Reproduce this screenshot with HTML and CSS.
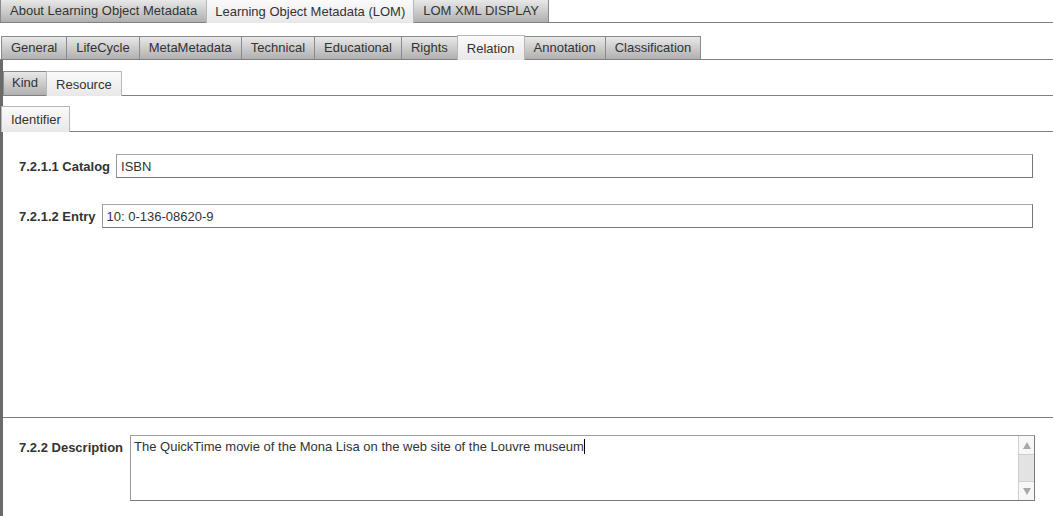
FILE: index.html
```html
<!DOCTYPE html>
<html>
<head>
<meta charset="utf-8">
<link rel="stylesheet" href="styles.css">
</head>
<body>
<div class="app">
  <div class="tabbar top">
    <div class="tab">About Learning Object Metadata</div>
    <div class="tab active">Learning Object Metadata (LOM)</div>
    <div class="tab">LOM XML DISPLAY</div>
  </div>
  <div class="tabbar second">
    <div class="tab">General</div>
    <div class="tab">LifeCycle</div>
    <div class="tab">MetaMetadata</div>
    <div class="tab">Technical</div>
    <div class="tab">Educational</div>
    <div class="tab">Rights</div>
    <div class="tab active">Relation</div>
    <div class="tab">Annotation</div>
    <div class="tab">Classification</div>
  </div>
  <div class="panel">
    <div class="tabbar third">
      <div class="tab">Kind</div>
      <div class="tab active">Resource</div>
    </div>
    <div class="tabbar fourth">
      <div class="tab active">Identifier</div>
    </div>
    <div class="fields">
      <div class="field">
        <label class="label">7.2.1.1 Catalog</label>
        <input class="input" type="text" value="ISBN">
      </div>
      <div class="field">
        <label class="label">7.2.1.2 Entry</label>
        <input class="input" type="text" value="10: 0-136-08620-9">
      </div>
    </div>
    <div class="desc">
      <label class="label">7.2.2 Description</label>
      <div class="textarea">
        <div class="ta-text">The QuickTime movie of the Mona Lisa on the web site of the Louvre museum<span class="caret"></span></div>
        <div class="scrollbar">
          <div class="arrow up"></div>
          <div class="thumb"></div>
          <div class="arrow down"></div>
        </div>
      </div>
    </div>
  </div>
</div>
</body>
</html>
```
FILE: styles.css
```css
* { box-sizing: border-box; }
html, body { margin: 0; padding: 0; background: #fff; }
body {
  font-family: "Liberation Sans", Arial, sans-serif;
  font-size: 13px;
  color: #333;
}
.app {
  display: flex;
  flex-direction: column;
  height: 516px;
  overflow: hidden;
}
.tabbar {
  display: flex;
  align-items: flex-end;
  border-bottom: 1px solid #808080;
}
.tab {
  height: 22px;
  line-height: 21px;
  padding: 0 9px;
  border: 1px solid #8a8a8a;
  border-bottom: none;
  margin-right: -1px;
  background: linear-gradient(#e8e8e8, #b0b0b0);
  color: #333;
  white-space: nowrap;
}
.tab.active {
  height: 23px;
  margin-bottom: -1px;
  background: linear-gradient(#fafafa, #e8e8e8);
  border-color: #b8b8b8;
  position: relative;
}
.top .tab { border-top: none; }
.top .tab.active { padding: 1px 8px 0; }
.second { margin-top: 12px; padding-left: 1px; }
.second .tab { height: 23px; line-height: 22px; padding: 0 9px; }
.second .tab.active { height: 25px; line-height: 25px; }
.panel {
  flex: 1;
  display: flex;
  flex-direction: column;
  border-left: 3px solid #6a6a6a;
}
.third { margin-top: 11px; }
.third .tab { height: 24px; line-height: 22px; padding: 0 8px; }
.third .tab.active { height: 25px; line-height: 26px; padding: 0 9px; }
.fourth { margin-top: 10px; margin-left: -2px; }
.fourth .tab { height: 25px; line-height: 25px; padding: 0 8px 0 9px; }
.fourth .tab.active { height: 26px; }
.fields {
  height: 286px;
  padding: 22px 20px 0 16px;
  display: flex;
  flex-direction: column;
  gap: 26px;
  border-bottom: 1px solid #7a7a7a;
}
.field {
  display: flex;
  align-items: center;
  gap: 6px;
}
.label {
  font-weight: bold;
  color: #333;
  white-space: nowrap;
}
.input {
  flex: 1;
  height: 24px;
  margin: 0;
  padding: 0 4px;
  font-family: "Liberation Sans", Arial, sans-serif;
  font-size: 13px;
  color: #333;
  border: 1px solid #777;
  border-top-color: #a8a8a8;
  border-left-color: #999;
  background: #fff;
  outline: none;
}
.desc {
  flex: 1;
  display: flex;
  align-items: flex-start;
  gap: 7px;
  padding: 17px 18px 0 16px;
}
.desc .label { padding-top: 5px; }
.textarea {
  flex: 1;
  height: 66px;
  display: flex;
  border: 1px solid #7a7a7a;
  border-top-color: #a0a0a0;
  border-left-color: #999;
  background: #fff;
}
.ta-text {
  flex: 1;
  padding: 3px 3px;
  line-height: 16px;
  color: #333;
}
.caret {
  display: inline-block;
  width: 1px;
  height: 15px;
  background: #000;
  vertical-align: -3px;
}
.scrollbar {
  width: 16px;
  display: flex;
  flex-direction: column;
  border-left: 1px solid #cfcfcf;
  background: #f7f7f7;
}
.arrow {
  height: 18px;
  display: flex;
  align-items: center;
  justify-content: center;
}
.arrow::before {
  content: "";
  width: 0;
  height: 0;
  border-left: 4px solid transparent;
  border-right: 4px solid transparent;
}
.arrow.up::before { border-bottom: 7px solid #a9a9a9; }
.arrow.down::before { border-top: 7px solid #a9a9a9; }
.thumb {
  flex: 1;
  background: #e3e3e3;
  border-top: 1px solid #cfcfcf;
  border-bottom: 1px solid #cfcfcf;
}
```
